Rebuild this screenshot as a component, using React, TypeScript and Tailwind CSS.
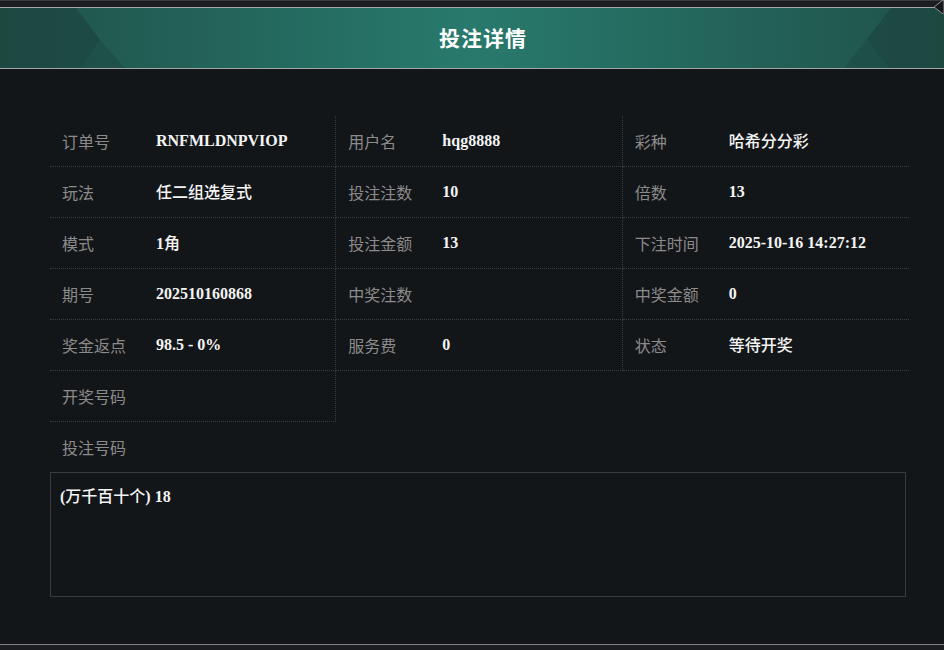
import React from "react";

const rows: [string, string][][] = [
  [["订单号", "RNFMLDNPVIOP"], ["用户名", "hqg8888"], ["彩种", "哈希分分彩"]],
  [["玩法", "任二组选复式"], ["投注注数", "10"], ["倍数", "13"]],
  [["模式", "1角"], ["投注金额", "13"], ["下注时间", "2025-10-16 14:27:12"]],
  [["期号", "202510160868"], ["中奖注数", ""], ["中奖金额", "0"]],
  [["奖金返点", "98.5 - 0%"], ["服务费", "0"], ["状态", "等待开奖"]],
];

const labelFont = { fontFamily: '"Noto Sans CJK SC", "Noto Sans", sans-serif' };
const valueFont = { fontFamily: '"Liberation Serif", "Noto Sans CJK SC", serif' };

function Value({ text }: { text: string }) {
  const parts = text.split(/([\u4e00-\u9fff]+)/).filter((p) => p.length > 0);
  return (
    <span className="text-[16px] text-[#f4f4f4]" style={valueFont}>
      {parts.map((p, i) =>
        /[\u4e00-\u9fff]/.test(p) ? (
          <span key={i} className="font-medium" style={labelFont}>
            {p}
          </span>
        ) : (
          <span key={i} className="font-bold">
            {p}
          </span>
        )
      )}
    </span>
  );
}

function Cell({ label, value, idx }: { label: string; value: string; idx: number }) {
  return (
    <div
      className={
        "h-[51px] flex items-center pl-3 border-b border-dotted border-[#3a3d41] " +
        (idx < 2 ? "border-r" : "")
      }
    >
      <span className="w-[94px] shrink-0 text-[16px] text-[#8b8b8b]" style={labelFont}>
        {label}
      </span>
      <Value text={value} />
    </div>
  );
}

export default function App() {
  return (
    <div className="w-[944px] h-[650px] bg-[#131619] flex flex-col overflow-hidden relative">
      <div className="h-[7px] bg-[#1b1d21] border-t border-[#3a3c3f] shrink-0" />
      <div
        className="h-[62px] shrink-0 border-y border-[#a3a7a8] relative flex items-center justify-center"
        style={{
          background: "linear-gradient(to right, #1f5249 0%, #24655b 25%, #287a6d 50%, #24655b 75%, #1f5249 100%)",
        }}
      >
        <svg className="absolute inset-0" width="944" height="60" viewBox="0 0 944 60">
          <polygon points="0,0 76,0 100,32 80,60 0,60" fill="#1c463f" opacity="0.75" />
          <polygon points="80,60 100,32 125,60" fill="#1e4d45" opacity="0.7" />
          <polygon points="944,0 891,0 867,31 889,60 944,60" fill="#1c463f" opacity="0.75" />
          <polygon points="889,60 867,31 844,60" fill="#1e4d45" opacity="0.7" />
        </svg>
        <span
          className="relative pl-[22px] text-[21px] font-bold text-white tracking-[1px]"
          style={labelFont}
        >
          投注详情
        </span>
      </div>
      <svg className="absolute top-0 right-0" width="14" height="14" viewBox="0 0 14 14">
        <polygon points="13,0 4,7 13,14 14,14 14,0" fill="#16181b" stroke="#8e9294" strokeWidth="1" />
      </svg>

      <div className="flex-1 pl-[50px] pt-[47px]">
        <div className="grid grid-cols-3 w-[859px]">
          {rows.map((r, ri) =>
            r.map(([l, v], ci) => <Cell key={ri + "-" + ci} label={l} value={v} idx={ci} />)
          )}
          <div className="h-[51px] flex items-center pl-3 border-b border-r border-dotted border-[#3a3d41]">
            <span className="w-[94px] shrink-0 text-[16px] text-[#8b8b8b]" style={labelFont}>
              开奖号码
            </span>
          </div>
        </div>
        <div className="h-[50px] flex items-center pl-3">
          <span className="text-[16px] text-[#8b8b8b]" style={labelFont}>
            投注号码
          </span>
        </div>
        <div className="w-[856px] h-[125px] border border-[#393b3e] pl-[9px] pt-[10px]">
          <div className="leading-[24px]">
            <Value text="(万千百十个) 18" />
          </div>
        </div>
      </div>
      <div className="h-[6px] shrink-0 border-t border-[#808486] bg-[#1b1d21]" />
    </div>
  );
}
